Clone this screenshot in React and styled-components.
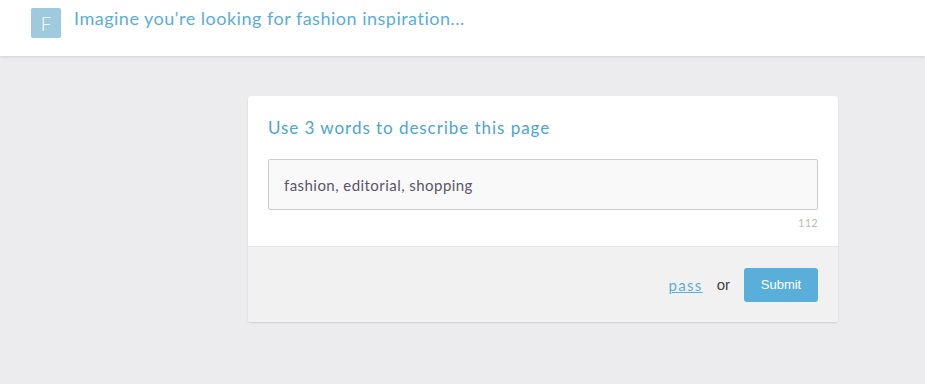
import styled, { createGlobalStyle } from 'styled-components';

const GlobalStyle = createGlobalStyle`
  html, body {
    margin: 0;
    padding: 0;
    background: #ececee;
    font-family: Lato, "Noto Sans", sans-serif;
  }
`;

const Page = styled.div`
  min-height: 384px;
  background: #ececee;
`;

const TopBar = styled.header`
  height: 56px;
  background: #fff;
  box-shadow: 0 1px 3px rgba(0, 0, 0, 0.12);
  display: flex;
  align-items: flex-start;
  gap: 13px;
  padding: 8px 0 0 31px;
  box-sizing: border-box;
`;

const Avatar = styled.div`
  width: 30px;
  height: 30px;
  border-radius: 2px;
  background: #9ecadd;
  color: #fff;
  font-size: 19px;
  font-weight: 300;
  display: flex;
  align-items: center;
  justify-content: center;
`;

const Prompt = styled.h1`
  margin: 0;
  font-size: 18px;
  font-weight: 400;
  letter-spacing: 0.5px;
  color: #5aaed8;
  line-height: 20px;
`;

const Body = styled.main`
  display: flex;
  padding: 40px 0 0 248px;
`;

const Card = styled.section`
  width: 590px;
  background: #fff;
  border-radius: 3px;
  box-shadow: 0 1px 2px rgba(0, 0, 0, 0.12);
  overflow: hidden;
`;

const CardTop = styled.div`
  padding: 21px 20px 17px;
  border-bottom: 1px solid #e4e4e4;
`;

const Question = styled.h2`
  margin: 0 0 20px;
  font-size: 17px;
  font-weight: 400;
  letter-spacing: 0.95px;
  color: #4da5d3;
  line-height: 22px;
`;

const Answer = styled.input`
  display: block;
  width: 100%;
  height: 51px;
  box-sizing: border-box;
  padding: 0 15px;
  background: #f9f9f9;
  border: 1px solid #cccccc;
  border-radius: 2px;
  font-family: Lato, "Noto Sans", sans-serif;
  font-size: 15px;
  letter-spacing: 0.45px;
  color: #5a5566;
  outline: none;
`;

const Counter = styled.div`
  text-align: right;
  font-size: 11px;
  letter-spacing: 0.3px;
  color: #bbbbbb;
  margin-top: 7px;
  line-height: 12px;
`;

const CardFooter = styled.div`
  height: 75px;
  background: #f1f1f1;
  display: flex;
  align-items: center;
  justify-content: flex-end;
  padding: 0 20px;
  font-family: "Liberation Sans", Arial, sans-serif;
`;

const PassLink = styled.a`
  font-family: Lato, "Noto Sans", sans-serif;
  font-size: 15px;
  letter-spacing: 1.3px;
  color: #5aafda;
  text-decoration: underline;
  cursor: pointer;
`;

const Or = styled.span`
  font-size: 15px;
  color: #444;
  margin: 0 14px;
`;

const SubmitButton = styled.button`
  width: 74px;
  height: 34px;
  background: #5aafda;
  color: #fff;
  border: none;
  border-radius: 3px;
  font-family: "Liberation Sans", Arial, sans-serif;
  font-size: 13px;
  cursor: pointer;
`;

export default function App() {
  return (
    <>
      <GlobalStyle />
      <Page>
        <TopBar>
          <Avatar>F</Avatar>
          <Prompt>Imagine you're looking for fashion inspiration...</Prompt>
        </TopBar>
        <Body>
          <Card>
            <CardTop>
              <Question>Use 3 words to describe this page</Question>
              <Answer defaultValue="fashion, editorial, shopping" />
              <Counter>112</Counter>
            </CardTop>
            <CardFooter>
              <PassLink>pass</PassLink>
              <Or>or</Or>
              <SubmitButton>Submit</SubmitButton>
            </CardFooter>
          </Card>
        </Body>
      </Page>
    </>
  );
}
